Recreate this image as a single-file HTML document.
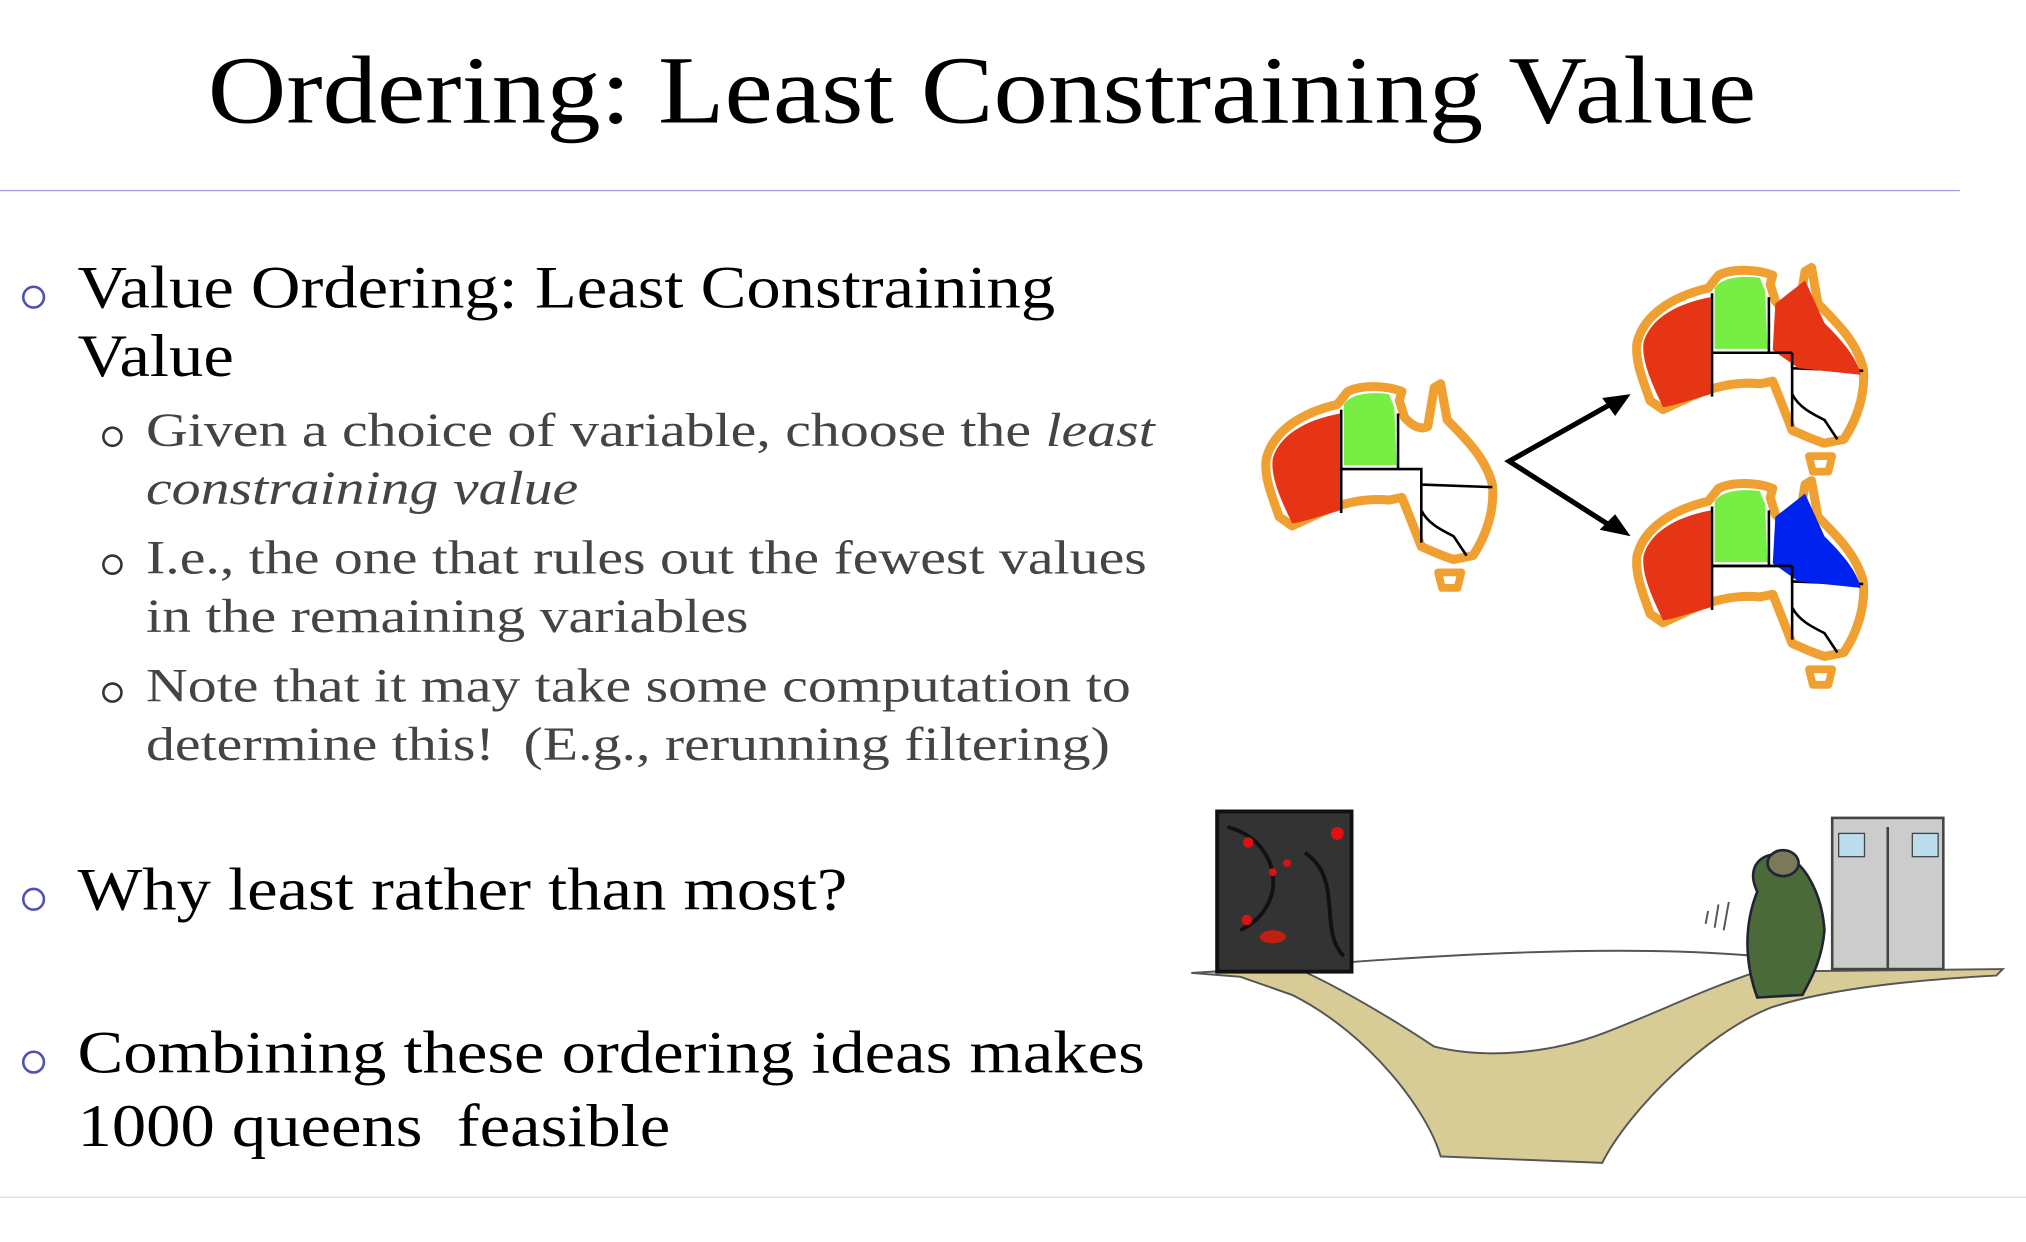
<!DOCTYPE html>
<html><head><meta charset="utf-8"><style>
html,body{margin:0;padding:0;background:#fff;overflow:hidden}
#w{width:2026px;height:1242px;position:relative;overflow:hidden}
#s{position:absolute;left:0;top:0;width:1568px;height:961px;transform:scale(1.2921);transform-origin:0 0;font-family:"Liberation Serif",serif}
.t{position:absolute;white-space:nowrap;transform-origin:0 0}
.b{position:absolute;width:14px;height:14px;border:2px solid #5050b0;border-radius:50%}
.sb{position:absolute;width:12px;height:12px;border:2px solid #333;border-radius:50%}
.l1{font-size:47px;color:#000;transform:scaleX(1.13)}
.l2{font-size:37px;color:#444;transform:scaleX(1.21)}
</style></head><body><div id="w"><div id="s">
<div class="t" style="left:0;width:1520px;text-align:center;top:28px;font-size:75px;color:#000;transform:scaleX(1.123);transform-origin:760px 0">Ordering: Least Constraining Value</div>
<div style="position:absolute;left:0;top:147px;width:1517px;height:1px;background:#a0a0e0"></div>
<div style="position:absolute;left:0;top:926px;width:1568px;height:1px;background:#ddd"></div>

<div class="b" style="left:17px;top:221px"></div>
<div class="t l1" style="left:60px;top:196px">Value Ordering: Least Constraining</div>
<div class="t l1" style="left:60px;top:249px">Value</div>

<div class="sb" style="left:79px;top:330px"></div>
<div class="t l2" style="left:113px;top:312px">Given a choice of variable, choose the <i>least</i></div>
<div class="t l2" style="left:113px;top:357px"><i>constraining value</i></div>
<div class="sb" style="left:79px;top:429px"></div>
<div class="t l2" style="left:113px;top:411px">I.e., the one that rules out the fewest values</div>
<div class="t l2" style="left:113px;top:456px">in the remaining variables</div>
<div class="sb" style="left:79px;top:528px"></div>
<div class="t l2" style="left:113px;top:510px">Note that it may take some computation to</div>
<div class="t l2" style="left:113px;top:555px">determine this!&nbsp; (E.g., rerunning filtering)</div>

<div class="b" style="left:17px;top:687px"></div>
<div class="t l1" style="left:60px;top:662px">Why least rather than most?</div>
<div class="b" style="left:17px;top:813px"></div>
<div class="t l1" style="left:60px;top:788px">Combining these ordering ideas makes</div>
<div class="t l1" style="left:60px;top:845px">1000 queens&nbsp; feasible</div>

<svg style="position:absolute;left:0;top:0" width="1568" height="961">
<defs>
<path id="ol" d="M5,60 C10,40 30,25 60,18 L68,8 C80,2 100,4 110,8 L108,15 L112,28 C118,35 125,38 130,35 L135,5 L140,2 L145,30 C160,45 175,60 180,80 C182,100 175,120 165,135 L150,138 C140,135 130,130 125,128 L118,110 L110,90 L100,92 C80,90 60,95 40,105 L25,112 L15,105 C10,90 3,75 5,60Z"/>
<g id="map">
<use href="#ol" fill="#fff" stroke="#f0a030" stroke-width="7" stroke-linejoin="round"/>
<path d="M62,25 L62,100 C45,105 30,110 25,110 C18,95 8,75 10,60 C15,42 35,30 62,25Z" fill="#e53515"/>
<path d="M65,18 C70,10 85,8 100,10 L104,20 L106,65 L65,65Z" fill="#77ee44"/>
<path d="M63,22 L63,102 M107,25 L107,68 M63,68 L125,68 L125,125 M125,80 L180,82 M125,100 C130,110 140,115 150,120 L160,135" stroke="#000" stroke-width="2" fill="none"/>
<path d="M138,148 L156,148 L153,160 L141,160Z" fill="none" stroke="#f0a030" stroke-width="6" stroke-linejoin="round"/>
</g>
</defs>
<use href="#map" x="975" y="295"/>
<g transform="translate(1262,205)"><use href="#map"/><path d="M112,30 L135,12 L150,45 C165,60 175,72 178,85 L130,80 L110,66 Z" fill="#e53515"/><path d="M125,68 L125,80 M63,68 L125,68" stroke="#000" stroke-width="2"/></g>
<g transform="translate(1262,370)"><use href="#map"/><path d="M112,30 L135,12 L150,45 C165,60 175,72 178,85 L130,80 L110,66 Z" fill="#0022ee"/><path d="M125,68 L125,80 M63,68 L125,68" stroke="#000" stroke-width="2"/></g>
<path d="M1248,312 L1168,357 L1248,408" stroke="#000" stroke-width="4" fill="none"/>
<path d="M1262,305 L1240,308 L1250,322Z M1262,415 L1238,410 L1250,398Z" fill="#000"/>

<path d="M922,753 L1000,748 C1030,760 1080,790 1110,810 C1150,820 1200,815 1240,800 C1280,785 1320,765 1360,752 L1550,750 L1545,755 C1450,760 1400,770 1370,780 C1320,800 1260,860 1240,900 L1115,895 C1105,860 1060,800 1000,770 L960,756Z" fill="#d8cc96" stroke="#555" stroke-width="1.5"/>
<path d="M1000,748 C1100,740 1250,730 1360,740" stroke="#555" stroke-width="1.5" fill="none"/>
<rect x="942" y="628" width="104" height="124" fill="#333" stroke="#111" stroke-width="3"/>
<path d="M950,640 C990,650 1000,700 960,720 M1010,660 C1040,680 1020,720 1040,740" stroke="#111" stroke-width="3" fill="none"/>
<circle cx="966" cy="652" r="4" fill="#e01010"/><circle cx="1035" cy="645" r="5" fill="#e01010"/><circle cx="985" cy="675" r="3" fill="#e01010"/><circle cx="996" cy="668" r="3" fill="#e01010"/><circle cx="965" cy="712" r="4" fill="#e01010"/><ellipse cx="985" cy="725" rx="10" ry="5" fill="#c02010"/>
<rect x="1418" y="633" width="86" height="117" fill="#ccc" stroke="#444" stroke-width="2"/>
<rect x="1423" y="645" width="20" height="18" fill="#bde" stroke="#444"/><rect x="1480" y="645" width="20" height="18" fill="#bde" stroke="#444"/>
<path d="M1461,640 L1461,750" stroke="#444" stroke-width="2"/>
<path d="M1360,690 C1350,670 1365,658 1380,662 C1395,665 1410,690 1412,720 C1410,745 1400,760 1395,770 L1360,772 C1352,750 1348,720 1360,690Z" fill="#4a6a3a" stroke="#223" stroke-width="2"/>
<ellipse cx="1380" cy="668" rx="12" ry="10" fill="#7a7a5a" stroke="#223" stroke-width="2"/>
<path d="M1320,715 L1322,705 M1327,718 L1330,700 M1334,720 L1338,698" stroke="#555" stroke-width="1.5"/>
</svg>
</div></div></body></html>
